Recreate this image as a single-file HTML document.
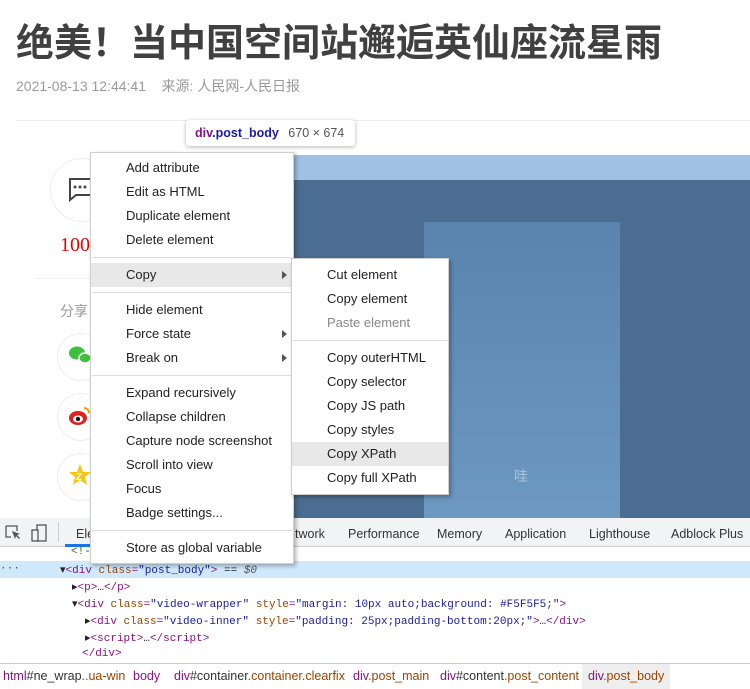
<!DOCTYPE html>
<html><head><meta charset="utf-8"><style>
*{margin:0;padding:0;box-sizing:border-box}
body{width:750px;height:688px;overflow:hidden;background:#fff;font-family:"Liberation Sans","Noto Sans CJK SC",sans-serif;position:relative}
.abs{position:absolute}
h1{position:absolute;left:16px;top:12px;font-size:38px;font-weight:bold;color:#404040;white-space:nowrap;letter-spacing:0}
.meta{left:16px;top:76px;font-size:14px;color:#999;white-space:nowrap}
.menu{position:absolute;background:#fff;border:1px solid #cfcfcf;box-shadow:2px 2px 4px rgba(0,0,0,.3);font-size:13px;color:#222}
.mi{height:24px;line-height:24px;padding-left:35px;white-space:nowrap;position:relative}
.sep{height:1px;background:#ddd;margin:5px 1px 5px}
.arr{position:absolute;right:6px;top:8px;width:0;height:0;border-left:5px solid #555;border-top:4px solid transparent;border-bottom:4px solid transparent}
.circ{position:absolute;width:64px;height:64px;border:1px solid #eee;border-radius:50%}
.code{font-family:"Liberation Mono",monospace;font-size:11px;white-space:nowrap;position:absolute;color:#881280}
.at{color:#994500}.av{color:#1a1aa6}.tx{color:#222}
.tab{position:absolute;top:527px;font-size:12.5px;color:#333}
</style></head><body>
<h1>绝美！当中国空间站邂逅英仙座流星雨</h1>
<div class="abs meta">2021-08-13 12:44:41 &nbsp;&nbsp; 来源: 人民网-人民日报</div>
<div class="abs" style="left:16px;top:120px;width:734px;height:1px;background:#eee"></div>
<div class="circ" style="left:50px;top:158px"></div>
<svg class="abs" style="left:66px;top:176px" width="28" height="28"><path d="M3 3h22v16H10l-6 5V3z" fill="none" stroke="#444" stroke-width="2"/><circle cx="9" cy="11" r="1.5" fill="#444"/><circle cx="14" cy="11" r="1.5" fill="#444"/><circle cx="19" cy="11" r="1.5" fill="#444"/></svg>
<div class="abs" style="left:60px;top:234px;font-size:20px;color:#e00;font-family:'Liberation Serif',serif">100</div>
<div class="abs" style="left:36px;top:278px;width:60px;height:1px;background:#eee"></div>
<div class="abs" style="left:60px;top:301px;font-size:14px;color:#999">分享</div>
<div class="circ" style="left:57px;top:333px;width:48px;height:48px"></div>
<div class="circ" style="left:57px;top:393px;width:48px;height:48px"></div>
<div class="circ" style="left:57px;top:453px;width:48px;height:48px"></div>
<svg class="abs" style="left:68px;top:343px" width="24" height="24"><ellipse cx="9" cy="10" rx="8" ry="6.5" fill="#3fbf3f"/><ellipse cx="17" cy="15" rx="6" ry="5" fill="#3fbf3f" stroke="#fff" stroke-width="1.5"/></svg>
<svg class="abs" style="left:68px;top:405px" width="24" height="22"><ellipse cx="10" cy="13" rx="9" ry="7" fill="#d22"/><ellipse cx="10" cy="14" rx="5" ry="3.5" fill="#fff"/><circle cx="10" cy="14" r="2.2" fill="#111"/><path d="M16 3a5 5 0 0 1 5 5" stroke="#f90" stroke-width="2" fill="none"/></svg>
<svg class="abs" style="left:68px;top:463px" width="24" height="24"><polygon points="12,1 15,9 23,9 17,14 19,22 12,17 5,22 7,14 1,9 9,9" fill="#f5c518"/><text x="8" y="17" font-size="10" fill="#fff" font-weight="bold">Z</text></svg>

<div class="abs" style="left:90px;top:155px;width:660px;height:25px;background:#9fc1e4"></div>
<div class="abs" style="left:90px;top:180px;width:660px;height:338px;background:#4a6d91"></div>
<div class="abs" style="left:424px;top:222px;width:196px;height:296px;background:linear-gradient(180deg,#5a84ae,#6d98c2)"></div>
<div class="abs" style="left:514px;top:466px;font-size:14px;color:#a8c4de">哇</div>

<div class="abs" style="left:186px;top:120px;width:169px;height:26px;background:#fff;border-radius:3px;box-shadow:0 1px 4px rgba(0,0,0,.3);font-size:12.5px;line-height:26px;padding-left:9px;white-space:nowrap"><b style="color:#881280">div</b><b style="color:#1a1aa6">.post_body</b> <span style="color:#555;margin-left:6px">670 × 674</span></div>

<div class="abs" style="left:0;top:518px;width:750px;height:29px;background:#f1f3f4;border-bottom:1px solid #ccc"></div>
<svg class="abs" style="left:4px;top:524px" width="44" height="18"><path d="M2 2h11v5M2 2v11h5" fill="none" stroke="#555" stroke-width="1.3"/><path d="M8 7l8 3-3 1 3 3-1 1-3-3-1 3z" fill="#555"/><rect x="33" y="1" width="9" height="16" fill="none" stroke="#555" stroke-width="1.3"/><rect x="28" y="6" width="6" height="11" fill="#f1f3f4" stroke="#555" stroke-width="1.3"/></svg>
<div class="abs" style="left:58px;top:522px;width:1px;height:20px;background:#ccc"></div>
<div class="tab" style="left:76px">Ele</div>
<div class="abs" style="left:65px;top:544px;width:25px;height:3px;background:#1a73e8"></div>
<div class="tab" style="left:295px">twork</div>
<div class="tab" style="left:348px">Performance</div>
<div class="tab" style="left:437px">Memory</div>
<div class="tab" style="left:505px">Application</div>
<div class="tab" style="left:589px">Lighthouse</div>
<div class="tab" style="left:671px">Adblock Plus</div>
<div class="abs" style="left:0;top:561px;width:750px;height:17px;background:#cfe8fc"></div>
<div class="code" style="left:71px;top:546px;color:#236e25">&lt;!-</div>
<div class="code" style="left:0;top:563px;color:#555">···</div>
<div class="code" style="left:60px;top:563px"><span class="tx">▾</span>&lt;div <span class="at">class</span>=<span class="av">"post_body"</span>&gt; <span class="tx">== </span><i style="color:#555">$0</i></div>
<div class="code" style="left:72px;top:580px"><span class="tx">▸</span>&lt;p&gt;<span class="tx">…</span>&lt;/p&gt;</div>
<div class="code" style="left:72px;top:597px"><span class="tx">▾</span>&lt;div <span class="at">class</span>=<span class="av">"video-wrapper"</span> <span class="at">style</span>=<span class="av">"margin: 10px auto;background: #F5F5F5;"</span>&gt;</div>
<div class="code" style="left:85px;top:614px"><span class="tx">▸</span>&lt;div <span class="at">class</span>=<span class="av">"video-inner"</span> <span class="at">style</span>=<span class="av">"padding: 25px;padding-bottom:20px;"</span>&gt;<span class="tx">…</span>&lt;/div&gt;</div>
<div class="code" style="left:85px;top:631px"><span class="tx">▸</span>&lt;script&gt;<span class="tx">…</span>&lt;/script&gt;</div>
<div class="code" style="left:82px;top:648px">&lt;/div&gt;</div>
<div class="abs" style="left:0;top:663px;width:750px;height:25px;border-top:1px solid #ccc;background:#fff;font-size:12.5px;line-height:25px;white-space:nowrap;color:#881280">
<span style="position:absolute;left:3px">html<span style="color:#333">#ne_wrap</span><span style="color:#994500">..ua-win</span></span>
<span style="position:absolute;left:133px">body</span>
<span style="position:absolute;left:174px">div<span style="color:#333">#container</span><span style="color:#994500">.container.clearfix</span></span>
<span style="position:absolute;left:353px">div<span style="color:#994500">.post_main</span></span>
<span style="position:absolute;left:440px">div<span style="color:#333">#content</span><span style="color:#994500">.post_content</span></span>
<span style="position:absolute;left:582px;background:#eee;padding:0 6px">div<span style="color:#994500">.post_body</span></span>
</div>

<div class="menu" style="left:90px;top:152px;width:204px;padding:3px 0">
<div class="mi">Add attribute</div>
<div class="mi">Edit as HTML</div>
<div class="mi">Duplicate element</div>
<div class="mi">Delete element</div>
<div class="sep"></div>
<div class="mi" style="background:#e8e8e8">Copy<span class="arr"></span></div>
<div class="sep"></div>
<div class="mi">Hide element</div>
<div class="mi">Force state<span class="arr"></span></div>
<div class="mi">Break on<span class="arr"></span></div>
<div class="sep"></div>
<div class="mi">Expand recursively</div>
<div class="mi">Collapse children</div>
<div class="mi">Capture node screenshot</div>
<div class="mi">Scroll into view</div>
<div class="mi">Focus</div>
<div class="mi">Badge settings...</div>
<div class="sep"></div>
<div class="mi">Store as global variable</div>
</div>
<div class="menu" style="left:291px;top:258px;width:158px;padding:4px 0">
<div class="mi">Cut element</div>
<div class="mi">Copy element</div>
<div class="mi" style="color:#888">Paste element</div>
<div class="sep"></div>
<div class="mi">Copy outerHTML</div>
<div class="mi">Copy selector</div>
<div class="mi">Copy JS path</div>
<div class="mi">Copy styles</div>
<div class="mi" style="background:#e8e8e8">Copy XPath</div>
<div class="mi">Copy full XPath</div>
</div>
</body></html>
